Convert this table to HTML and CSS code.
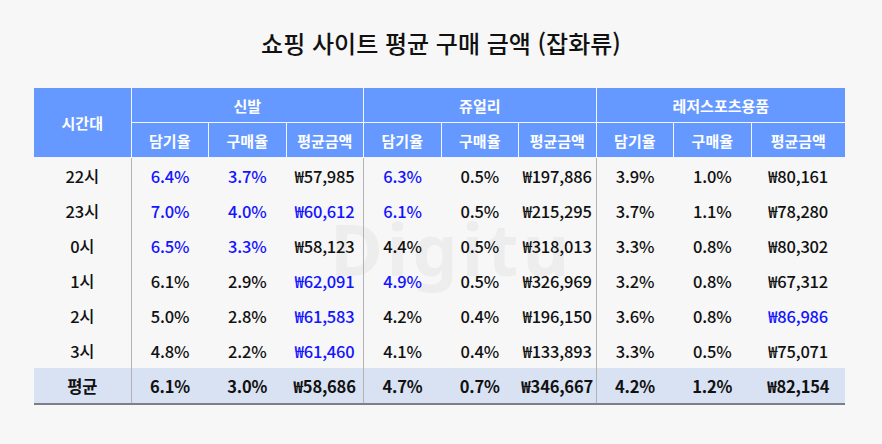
FILE: index.html
```html
<!DOCTYPE html>
<html lang="ko">
<head>
<meta charset="utf-8">
<link rel="stylesheet" href="styles.css">
</head>
<body>
<div class="page">
  <h1 class="title">쇼핑 사이트 평균 구매 금액 (잡화류)</h1>
  <div class="wrap">
    <table class="grid">
      <colgroup>
        <col class="c-time">
        <col class="c-n"><col class="c-n"><col class="c-n">
        <col class="c-n"><col class="c-n"><col class="c-n">
        <col class="c-n"><col class="c-n"><col class="c-last">
      </colgroup>
      <thead>
        <tr class="h1">
          <th rowspan="2">시간대</th>
          <th colspan="3">신발</th>
          <th colspan="3">쥬얼리</th>
          <th colspan="3">레저스포츠용품</th>
        </tr>
        <tr class="h2">
          <th>담기율</th><th>구매율</th><th>평균금액</th>
          <th>담기율</th><th>구매율</th><th>평균금액</th>
          <th>담기율</th><th>구매율</th><th>평균금액</th>
        </tr>
      </thead>
      <tbody>
        <tr><td>22시</td><td class="g b">6.4%</td><td class="b">3.7%</td><td>₩57,985</td><td class="g b">6.3%</td><td>0.5%</td><td>₩197,886</td><td class="g">3.9%</td><td>1.0%</td><td>₩80,161</td></tr>
        <tr><td>23시</td><td class="g b">7.0%</td><td class="b">4.0%</td><td class="b">₩60,612</td><td class="g b">6.1%</td><td>0.5%</td><td>₩215,295</td><td class="g">3.7%</td><td>1.1%</td><td>₩78,280</td></tr>
        <tr><td>0시</td><td class="g b">6.5%</td><td class="b">3.3%</td><td>₩58,123</td><td class="g">4.4%</td><td>0.5%</td><td>₩318,013</td><td class="g">3.3%</td><td>0.8%</td><td>₩80,302</td></tr>
        <tr><td>1시</td><td class="g">6.1%</td><td>2.9%</td><td class="b">₩62,091</td><td class="g b">4.9%</td><td>0.5%</td><td>₩326,969</td><td class="g">3.2%</td><td>0.8%</td><td>₩67,312</td></tr>
        <tr><td>2시</td><td class="g">5.0%</td><td>2.8%</td><td class="b">₩61,583</td><td class="g">4.2%</td><td>0.4%</td><td>₩196,150</td><td class="g">3.6%</td><td>0.8%</td><td class="b">₩86,986</td></tr>
        <tr><td>3시</td><td class="g">4.8%</td><td>2.2%</td><td class="b">₩61,460</td><td class="g">4.1%</td><td>0.4%</td><td>₩133,893</td><td class="g">3.3%</td><td>0.5%</td><td>₩75,071</td></tr>
        <tr class="avg"><td>평균</td><td class="g">6.1%</td><td>3.0%</td><td>₩58,686</td><td class="g">4.7%</td><td>0.7%</td><td>₩346,667</td><td class="g">4.2%</td><td>1.2%</td><td>₩82,154</td></tr>
      </tbody>
    </table>
    <div class="mark">Digitu</div>
  </div>
</div>
</body>
</html>
```
FILE: styles.css
```css
html, body {
  margin: 0;
  padding: 0;
  background: #f7f7f7;
}
body {
  font-family: "Noto Sans CJK KR", "Noto Sans", sans-serif;
  color: #111;
  width: 882px;
  height: 444px;
  overflow: hidden;
}
.page {
  padding-top: 28px;
}
.title {
  margin: 0;
  text-align: center;
  font-size: 24px;
  font-weight: 500;
  line-height: 30px;
  color: #111;
}
.wrap {
  position: relative;
  margin: 30px 0 0 34px;
  width: 811px;
}
.grid {
  border-collapse: collapse;
  table-layout: fixed;
  width: 811px;
  position: relative;
  z-index: 1;
}
.c-time { width: 97px; }
.c-n { width: 77.5px; }
.c-last { width: 94px; }
.grid th {
  background: #6699ff;
  color: #fff;
  font-weight: 700;
  font-size: 15px;
  border: 1px solid #f2f5ff;
  padding: 0;
  height: 34px;
  text-align: center;
}
.grid thead tr.h1 th { border-top: none; }
.grid thead th:first-child { border-left: none; }
.grid thead tr th:last-child { border-right: none; }
.grid td {
  height: 35px;
  padding: 0;
  text-align: center;
  font-size: 16.5px;
  font-weight: 500;
  color: #111;
  white-space: nowrap;
  letter-spacing: -0.2px;
}
.grid td.g { border-left: 1px solid #b3b3b3; }
.grid td.b { color: #1414ff; }
.grid tr.avg td {
  background: #d9e2f3;
  font-weight: 700;
  border-bottom: 2px solid #7a7f88;
}
.mark {
  position: absolute;
  left: 296px;
  top: 124px;
  font-family: "Noto Sans", sans-serif;
  font-weight: 700;
  font-size: 72px;
  letter-spacing: 4px;
  color: rgba(0, 0, 0, 0.038);
  z-index: 0;
  pointer-events: none;
  line-height: 1;
}
```
